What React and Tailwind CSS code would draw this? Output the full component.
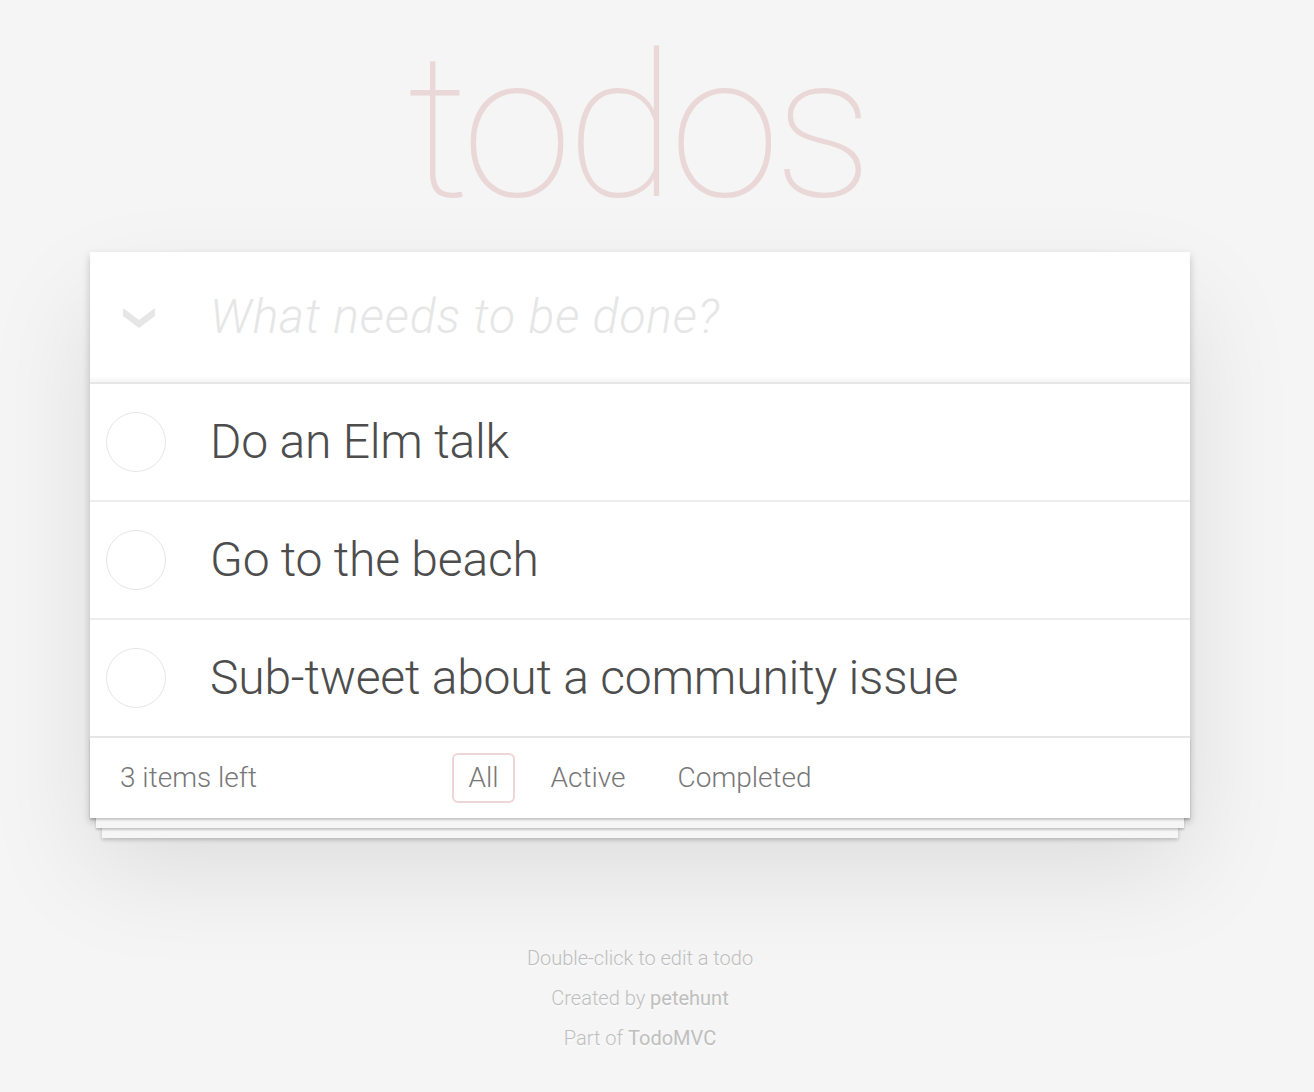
export default function App() {
  const todos = ["Do an Elm talk", "Go to the beach", "Sub-tweet about a community issue"];
  return (
    <div className="min-h-[1092px] w-full bg-[#f5f5f5] text-[#4d4d4d] font-light font-['Helvetica_Neue',Roboto,Arial,sans-serif] antialiased">
      <div className="w-[1280px]">
        <div className="pt-[28px] h-[252px]">
          <h1 className="pr-[6px] text-center text-[200px] leading-[200px] font-thin tracking-[-6px] text-[rgba(175,47,47,0.15)]">todos</h1>
        </div>
        <section className="relative mx-auto w-[1100px] bg-white shadow-[0_4px_8px_0_rgba(0,0,0,0.2),0_50px_100px_0_rgba(0,0,0,0.1)]">
          <header className="flex h-[132px] items-center border-b-2 border-[#e6e6e6] shadow-[inset_0_-4px_2px_rgba(0,0,0,0.03)]">
            <div className="w-[120px] pl-[33px] pt-[2px]">
              <svg width="32" height="20" viewBox="0 0 32 20">
                <polygon points="0,0 16,12 32,0 32,8 16,20 0,8" fill="#e6e6e6" />
              </svg>
            </div>
            <input
              className="flex-1 bg-transparent outline-none text-[48px] leading-[58px] font-light text-[#4d4d4d] placeholder:italic placeholder:font-light placeholder:tracking-[0.9px] placeholder:text-[#e6e6e6]"
              placeholder="What needs to be done?"
            />
          </header>
          <ul>
            {todos.map((t, i) => (
              <li
                key={t}
                className={
                  i < todos.length - 1
                    ? "flex h-[118px] items-center border-b-2 border-[#ededed]"
                    : "flex h-[116px] items-center"
                }
              >
                <div className="ml-[16px] h-[60px] w-[60px] rounded-full border-[1.5px] border-[#e6e6e6]" />
                <span className="ml-[44px] text-[48px] leading-[58px] font-light tracking-[-0.2px] text-[#4d4d4d]">{t}</span>
              </li>
            ))}
          </ul>
          <footer className="relative grid h-[82px] grid-cols-[1fr_auto_1fr] items-center border-t-2 border-[#e6e6e6] px-[30px] text-[28px] text-[#777]">
            <div className="pointer-events-none absolute inset-0 shadow-[0_2px_2px_rgba(0,0,0,0.2),0_16px_0_-6px_#f6f6f6,0_18px_2px_-6px_rgba(0,0,0,0.2),0_32px_0_-12px_#f6f6f6,0_34px_4px_-12px_rgba(0,0,0,0.2)]" />
            <span className="relative">3 items left</span>
            <ul className="relative flex items-center gap-[20px]">
              <li className="rounded-[6px] border-2 border-[rgba(175,47,47,0.2)] px-[14px] py-[6px] leading-[34px]">All</li>
              <li className="rounded-[6px] border-2 border-transparent px-[14px] py-[6px] leading-[34px]">Active</li>
              <li className="rounded-[6px] border-2 border-transparent px-[14px] py-[6px] leading-[34px]">Completed</li>
            </ul>
            <span />
          </footer>
        </section>
        <div className="mt-[130px] flex flex-col gap-[20px] text-center text-[20px] leading-[20px] text-[#bfbfbf] [text-shadow:0_2px_0_rgba(255,255,255,0.5)]">
          <p>Double-click to edit a todo</p>
          <p>
            Created by <span className="font-normal">petehunt</span>
          </p>
          <p>
            Part of <span className="font-normal">TodoMVC</span>
          </p>
        </div>
      </div>
    </div>
  );
}
